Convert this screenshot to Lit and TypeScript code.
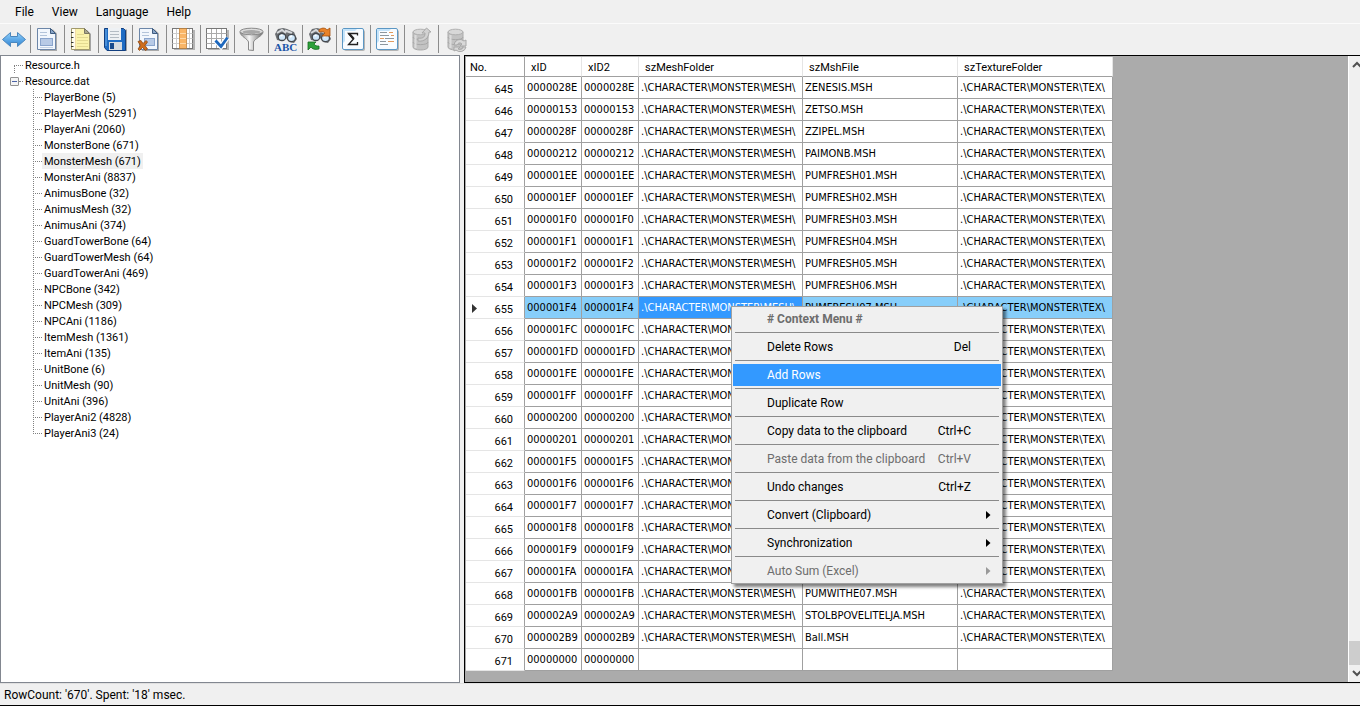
import { LitElement, html, svg, css, nothing } from "lit";
import { customElement, state } from "lit/decorators.js";
import { classMap } from "lit/directives/class-map.js";

const MENUS = ["File", "View", "Language", "Help"];

const TREE: [string, number][] = [
  ["PlayerBone", 5], ["PlayerMesh", 5291], ["PlayerAni", 2060], ["MonsterBone", 671],
  ["MonsterMesh", 671], ["MonsterAni", 8837], ["AnimusBone", 32], ["AnimusMesh", 32],
  ["AnimusAni", 374], ["GuardTowerBone", 64], ["GuardTowerMesh", 64], ["GuardTowerAni", 469],
  ["NPCBone", 342], ["NPCMesh", 309], ["NPCAni", 1186], ["ItemMesh", 1361], ["ItemAni", 135],
  ["UnitBone", 6], ["UnitMesh", 90], ["UnitAni", 396], ["PlayerAni2", 4828], ["PlayerAni3", 24],
];

const MESH = ".\\CHARACTER\\MONSTER\\MESH\\";
const TEX = ".\\CHARACTER\\MONSTER\\TEX\\";

const ROWS: [string, string][] = [
  ["0000028E", "ZENESIS.MSH"], ["00000153", "ZETSO.MSH"], ["0000028F", "ZZIPEL.MSH"],
  ["00000212", "PAIMONB.MSH"], ["000001EE", "PUMFRESH01.MSH"], ["000001EF", "PUMFRESH02.MSH"],
  ["000001F0", "PUMFRESH03.MSH"], ["000001F1", "PUMFRESH04.MSH"], ["000001F2", "PUMFRESH05.MSH"],
  ["000001F3", "PUMFRESH06.MSH"], ["000001F4", "PUMFRESH07.MSH"], ["000001FC", ""],
  ["000001FD", ""], ["000001FE", ""], ["000001FF", ""], ["00000200", ""], ["00000201", ""],
  ["000001F5", ""], ["000001F6", ""], ["000001F7", ""], ["000001F8", ""], ["000001F9", ""],
  ["000001FA", ""], ["000001FB", "PUMWITHE07.MSH"], ["000002A9", "STOLBPOVELITELJA.MSH"],
  ["000002B9", "Ball.MSH"], ["00000000", ""],
];
const FIRST = 645;

interface Entry { label: string; key?: string; off?: boolean; sub?: boolean; title?: boolean; }
const CONTEXT: Entry[] = [
  { label: "# Context Menu #", off: true, title: true },
  { label: "Delete Rows", key: "Del" },
  { label: "Add Rows" },
  { label: "Duplicate Row" },
  { label: "Copy data to the clipboard", key: "Ctrl+C" },
  { label: "Paste data from the clipboard", key: "Ctrl+V", off: true },
  { label: "Undo changes", key: "Ctrl+Z" },
  { label: "Convert (Clipboard)", sub: true },
  { label: "Synchronization", sub: true },
  { label: "Auto Sum (Excel)", sub: true, off: true },
];

const page = (body: unknown) => svg`
  <path d="M5 2.500h13l4 4V24H5z" fill="#555" opacity=".45"/>
  <path d="M2.500 1.500h13l5 5v16h-18z" fill="#f2f7fd" stroke="#6c86a8"/>
  <path d="M15.500 1.500v5h5z" fill="#8aa6c9" stroke="#3f5c80"/>${body}`;
const binoculars = svg`
  <path d="M2 7l3-5 5-1 4 1 7 3 3 7-3 4-5-1-3-4-4 3-5-1z" fill="#6b6e72"/>
  <path d="M4 6l5-3 4 3M12 3.500l7 2.500" stroke="#d5d8db" stroke-width="2" fill="none"/>
  <ellipse cx="9" cy="10" rx="3.800" ry="3.500" fill="#cfe7fa" stroke="#44484d" stroke-width="1.300"/>
  <ellipse cx="18.500" cy="11" rx="4" ry="3.700" fill="#cfe7fa" stroke="#44484d" stroke-width="1.300"/>
  <path d="M7.500 9l2-1M17 10l2-1" stroke="#fff" stroke-width="1.500"/>`;
const drum = svg`
  <path d="M4 5v15c0 4 15 4 15 0V5z" fill="#c3c3c3" stroke="#aaa"/>
  <path d="M4 10c0 3.500 15 3.500 15 0M4 15c0 3.500 15 3.500 15 0" stroke="#a8a8a8" fill="none"/>
  <path d="M6.500 8v13" stroke="#dcdcdc" stroke-width="2"/>
  <ellipse cx="11.500" cy="5" rx="7.500" ry="2.800" fill="#d8d8d8" stroke="#b0b0b0"/>`;
const sheet = svg`
  <rect x="3" y="3" width="21" height="21" rx="2" fill="#777" opacity=".5"/>
  <rect x="1.500" y="1.500" width="21" height="21" rx="1.500" fill="#f7fbff" stroke="#5b97c4"/>
  <path d="M2 16V2h14z" fill="#c5e4fa"/>
  <rect x="4" y="4" width="16" height="16" fill="#fafdff"/>`;

const TOOLS: { name: string; art: unknown; off?: boolean }[] = [
  { name: "Switch", art: svg`
    <defs><linearGradient id="a" x2="0" y2="1"><stop stop-color="#8fd0fb"/><stop offset="1" stop-color="#2f83d3"/></linearGradient></defs>
    <path d="M1.500 12.500l8-7v4h7v-4l8 7-8 7v-4h-7v4z" fill="url(#a)" stroke="#4a86bd"/>` },
  { name: "Open", art: page(svg`
    <path d="M5 5.500h7M5 8.500h7" stroke="#b3c4da"/>
    <rect x="5.500" y="11.500" width="12" height="7" fill="#b7cae6" stroke="#8aa5cd"/>
    <path d="M5 20.500h13" stroke="#c4d3e6"/>`) },
  { name: "Open list", art: svg`
    <path d="M5 3h13l4 4v17H5z" fill="#555" opacity=".5"/>
    <path d="M2.500 1.500h13l5 5v16h-18z" fill="#fbf3ac" stroke="#a1996d"/>
    <path d="M3 2h3v20H3z" fill="#fffdf0"/><path d="M6.500 2v20" stroke="#f0dba8"/>
    <path d="M8 7.500h7M8 10.500h11M8 13.500h11M8 16.500h11M8 19.500h11" stroke="#e4da92"/>
    <path d="M15.500 1.500v5h5z" fill="#a9a68d" stroke="#7a7763"/>
    <path d="M2 5.500h2.500M2 10.500h2.500M2 15.500h2.500M2 19.500h2.500" stroke="#333"/>` },
  { name: "Save", art: svg`
    <path d="M4 2.500h20V24H4z" fill="#555" opacity=".5"/>
    <path d="M1.500 1.500h19l2 2v20H4l-2.500-3z" fill="#1f6cc4" stroke="#123f80"/>
    <path d="M5 1h13v12H5z" fill="#eef1f4"/><path d="M7 4.500h9M7 7.500h9M7 10.500h9" stroke="#b4bcc4"/>
    <path d="M3 2v17" stroke="#73b1ec"/>
    <path d="M6 15h13v8H6z" fill="#d6dbe1"/><path d="M7 16h4v6H7z" fill="#17498c"/>` },
  { name: "Close file", art: page(svg`
    <path d="M5 5.500h7M5 8.500h7" stroke="#b3c4da"/>
    <rect x="7.500" y="11.500" width="10" height="7" fill="#b7cae6" stroke="#8aa5cd"/>
    <path d="M1 14.500l3-1 2 3 3-3 1.500 1.500-2.500 3.500 2.500 3.500-2 1.500-3-3-3 3-1.500-1.500 2.500-3.500z" fill="#cf6d1b" stroke="#8a4510" stroke-width=".800"/>`) },
  { name: "Columns", art: svg`
    <rect x="3" y="3" width="21" height="20" fill="#777" opacity=".5"/>
    <rect x="1.500" y="1.500" width="20" height="20" fill="#fff" stroke="#777"/>
    <path d="M1.500 6.500h20M1.500 11.500h20M1.500 16.500h20M5.500 2v19M18.500 2v19" stroke="#ccc"/>
    <rect x="8.500" y="1.500" width="7" height="20" fill="#f9b566" stroke="#b77831" stroke-width=".700"/>
    <path d="M9 6.500h6M9 11.500h6M9 16.500h6" stroke="#ffd9a6"/>` },
  { name: "Check table", art: svg`
    <rect x="3" y="3" width="21" height="20" fill="#777" opacity=".5"/>
    <rect x="1.500" y="1.500" width="20" height="20" fill="#fff" stroke="#777"/>
    <path d="M1.500 6.500h20M1.500 11.500h20M1.500 16.500h20M6.500 2v19M11.500 2v19M16.500 2v19" stroke="#aaa"/>
    <path d="M11 14l5 5.500 6.500-9" stroke="#fff" stroke-width="5" fill="none"/>
    <path d="M10.500 13.500l5.500 6 6.500-9" stroke="#1e68bd" stroke-width="2.800" fill="none"/>` },
  { name: "Filter", art: svg`
    <defs><linearGradient id="f"><stop stop-color="#888"/><stop offset=".4" stop-color="#f8f8f8"/><stop offset="1" stop-color="#6a6a6a"/></linearGradient></defs>
    <path d="M1 5c0 4 8 7 8.500 10v8l5 .500V15C15 12 24 9 24 5z" fill="url(#f)" stroke="#888"/>
    <ellipse cx="12.500" cy="4.500" rx="11.500" ry="3.300" fill="#ddd" stroke="#888"/>
    <ellipse cx="12.500" cy="5" rx="9" ry="1.900" fill="#a8a8a8"/>` },
  { name: "Find text", art: svg`${binoculars}<text x="1" y="24" class="abc">ABC</text>` },
  { name: "Replace", art: svg`${binoculars}
    <path d="M12 3c3-3 7-2 8 0l3-2v8h-8l3-3c-2-2-4-1-6-1z" fill="#e8832a" stroke="#a14f0e" stroke-width=".800"/>
    <path d="M1 15h8l-2 2c1 2 3 2 5 2v3c-4 1-7 0-8-2l-3 3z" fill="#2ea23b" stroke="#17691f" stroke-width=".800"/>` },
  { name: "Sum", art: svg`${sheet}<path d="M16.500 8.500V6.500h-9l5 5.500-5 5.500h9v-2.500" fill="none" stroke="#222" stroke-width="1.300"/><path d="M8 6.500l4.800 5.500" stroke="#222" stroke-width="2.200"/>` },
  { name: "Log", art: svg`${sheet}
    <path d="M5 5.500h7M5 8.500h9M10 11.500h9M5 14.500h6M5 17.500h8" stroke="#8d979e"/>
    <path d="M14 5.500h4M16 8.500h3M5 11.500h4M13 14.500h6" stroke="#e29b5d"/>` },
  { name: "Export to database", off: true, art: svg`${drum}<path d="M9 11c6 1 7-2 7-5h-3l4.500-5 4.500 4h-2c0 6-5 10-11 9z" fill="#d2d2d2" stroke="#a8a8a8"/>` },
  { name: "Refresh database", off: true, art: svg`${drum}<path d="M10 18a6 6 0 0 1 10-4l2-1v6h-6l2-2c-2-2-4-1-5 1zM22 20a6 6 0 0 1-10 3l-2 1v-4h6l-2 2c3 1 5 0 5-2z" fill="#d8d8d8" stroke="#a8a8a8"/>` },
];

@customElement("app-root")
export class AppRoot extends LitElement {
  @state() private node = "MonsterMesh";
  @state() private active = "Add Rows";

  static styles = css`
    :host {
      display: flex; flex-direction: column; height: 100vh; overflow: hidden; box-sizing: border-box;
      position: relative; background: #f0f0f0; color: #000; border-bottom: 1px solid #000;
      font: 12px/16px Roboto, "Noto Sans", sans-serif;
    }
    button { font: inherit; color: inherit; background: none; border: 0; padding: 0; margin: 0; text-align: left; }
    ul { list-style: none; margin: 0; padding: 0; }
    .menubar { display: flex; height: 23px; padding-left: 6px; border-bottom: 1px solid #fbfbfb; }
    .menubar button { padding: 0 9px; }
    .tools { display: flex; height: 31px; box-sizing: border-box; padding-top: 1px; margin-left: -3px; }
    .tools button { width: 34px; height: 28px; border-right: 1px solid #8c8c8c; display: flex; align-items: center; justify-content: center; flex: none; }
    .tools button:last-child { border: 0; }
    .tools svg { width: 25px; height: 25px; }
    .abc { font: bold 11px "Liberation Serif", serif; fill: #1c55a8; }
    .work { flex: 1; min-height: 0; display: flex; gap: 4px; }
    .tree { width: 460px; flex: none; box-sizing: border-box; border: 1px solid #828790; background: #fff; padding: 1px 0 0 13px; font-size: 11px; }
    .tree button { box-sizing: border-box; height: 16px; line-height: 14px; padding: 2px 2px 0; }
    .root { display: flex; align-items: center; }
    .root::before { content: ""; width: 9px; border-top: 1px dotted #808080; }
    .first { position: relative; }
    .first::after { content: ""; position: absolute; left: 0; top: 8px; height: 8px; border-left: 1px dotted #808080; }
    .open { margin-left: -4px; }
    .open::before { display: none; }
    .box { width: 9px; height: 9px; box-sizing: border-box; border: 1px solid #919191; border-radius: 1px; background: linear-gradient(90deg, #4b63a7, #4b63a7) center / 5px 1px no-repeat #f4f4f4; }
    .stub { width: 4px; border-top: 1px dotted #808080; }
    .kids { margin-left: 19px; }
    .kids li { display: flex; height: 16px; background: repeating-linear-gradient(#808080 0 1px, transparent 1px 2px) 0 0 / 1px 100% no-repeat; align-items: center; }
    .kids li:last-child { background-size: 1px 8px; }
    .kids li::before { content: ""; width: 9px; border-top: 1px dotted #808080; }
    .kids .sel { background: #f0f0f0; }
    .view { flex: 1; min-width: 0; display: flex; border: 1px solid #000; border-right: 0; background: #ababab; box-sizing: border-box; }
    .grid { flex: 1; min-width: 0; overflow: hidden; padding: 1px 0 0 1px; }
    table { table-layout: fixed; width: 647px; border-spacing: 0; background: #fff; font-size: 11px; line-height: 16px; }
    th, td { box-sizing: border-box; padding: 1px 2px 0; border: solid #a0a0a0; border-width: 0 1px 1px 0; text-align: left; font-weight: normal; white-space: nowrap; overflow: hidden; }
    thead th { height: 20px; padding: 2px 6px 0; border-right-color: #e5e5e5; }
    thead th:first-child { padding: 3px 0 0 4px; border-right-color: #a0a0a0; }
    td { height: 22px; font-family: "DejaVu Sans Condensed", "DejaVu Sans", sans-serif; font-stretch: condensed; }
    tbody th { height: 22px; border-bottom-color: #e5e5e5; padding: 5px 11px 0 6px; }
    .num { display: flex; align-items: flex-start; justify-content: space-between; }
    .num svg { width: 5px; height: 13px; }
    .cur td { background: #87cefa; }
    .cur .pick { background: #3399ff; color: #fff; }
    .c0 { width: 59px; } .c1 { width: 57px; } .c3 { width: 164px; } .c4 { width: 155px; }
    .scroll { width: 11px; flex: none; display: flex; flex-direction: column; background: #f0f0f0; border-left: 1px solid #fff; overflow: hidden; }
    .scroll svg { width: 17px; height: 17px; flex: none; }
    .space { flex: 1; }
    .thumb { height: 24px; background: #cdcdcd; }
    .status { height: 22px; padding: 3px 4px; box-sizing: border-box; flex: none; border-top: 1px solid #e0e0e0; }
    .ctx { position: absolute; left: 731px; top: 306px; width: 272px; box-sizing: border-box; border: 1px solid #a0a0a0; padding: 1px; background: #f0f0f0; box-shadow: 3px 3px 3px rgba(0, 0, 0, .5); }
    .ctx li + li { padding-top: 6px; background: linear-gradient(#8a8a8a, #8a8a8a) 2px 2px / 264px 1px no-repeat; }
    .ctx button { display: flex; align-items: center; width: 100%; height: 22px; padding: 0 10px 0 34px; }
    .ctx span { flex: 1; white-space: nowrap; }
    .ctx kbd { font: inherit; padding-right: 20px; }
    .ctx svg { width: 5px; height: 8px; }
    .ctx .off { color: #6d6d6d; }
    .ctx .title { font-weight: bold; }
    .ctx .hot { background: #3399ff; color: #fff; }
  `;

  private entry(e: Entry) {
    return html`<li role="none"><button role="menuitem" ?disabled=${e.off}
      class=${classMap({ off: !!e.off, title: !!e.title, hot: e.label === this.active })}
      @mouseenter=${() => (this.active = e.label)}>
      <span>${e.label}</span>${e.key ? html`<kbd>${e.key}</kbd>` : nothing}
      ${e.sub ? html`<svg viewBox="0 0 5 8"><path d="M0 0l4.500 4L0 8z" fill=${e.off ? "#999" : "#000"} /></svg>` : nothing}
    </button></li>`;
  }

  private row([id, file]: [string, string], i: number) {
    const n = FIRST + i, cur = n === 655, last = i === ROWS.length - 1;
    return html`<tr class=${cur ? "cur" : ""}>
      <th scope="row"><div class="num">${cur
        ? html`<svg viewBox="0 0 5 13"><path d="M0 2l5 4.500L0 11z" fill="#333" /></svg>` : html`<i></i>`}${n}</div></th>
      <td>${id}</td><td>${id}</td><td class="pick">${last ? "" : MESH}</td><td>${file}</td><td>${last ? "" : TEX}</td>
    </tr>`;
  }

  render() {
    return html`
      <nav class="menubar">${MENUS.map((m) => html`<button>${m}</button>`)}</nav>
      <div class="tools" role="toolbar">${TOOLS.map((t) => html`
        <button aria-label=${t.name} ?disabled=${t.off}><svg viewBox="0 0 25 25">${t.art}</svg></button>`)}
      </div>
      <main class="work">
        <section class="tree">
          <div class="root first"><button>Resource.h</button></div>
          <div class="root open"><i class="box"></i><i class="stub"></i><button>Resource.dat</button></div>
          <ul class="kids">${TREE.map(([name, n]) => html`<li><button
            class=${classMap({ sel: name === this.node })}
            @click=${() => (this.node = name)}>${name} (${n})</button></li>`)}</ul>
        </section>
        <section class="view">
          <div class="grid"><table>
            <colgroup><col class="c0"><col class="c1"><col class="c1"><col class="c3"><col class="c4"><col class="c4"></colgroup>
            <thead><tr><th>No.</th><th>xID</th><th>xID2</th><th>szMeshFolder</th><th>szMshFile</th><th>szTextureFolder</th></tr></thead>
            <tbody>${ROWS.map((r, i) => this.row(r, i))}</tbody>
          </table></div>
          <div class="scroll">
            <svg viewBox="0 0 17 17"><path d="M4 11l4-4 4 4" fill="none" stroke="#505050" stroke-width="2" /></svg>
            <div class="space"></div><div class="thumb"></div>
            <svg viewBox="0 0 17 17"><path d="M4 6l4 4 4-4" fill="none" stroke="#505050" stroke-width="2" /></svg>
          </div>
        </section>
      </main>
      <footer class="status">RowCount: '670'. Spent: '18' msec.</footer>
      <ul class="ctx" role="menu">${CONTEXT.map((e) => this.entry(e))}</ul>
    `;
  }
}
